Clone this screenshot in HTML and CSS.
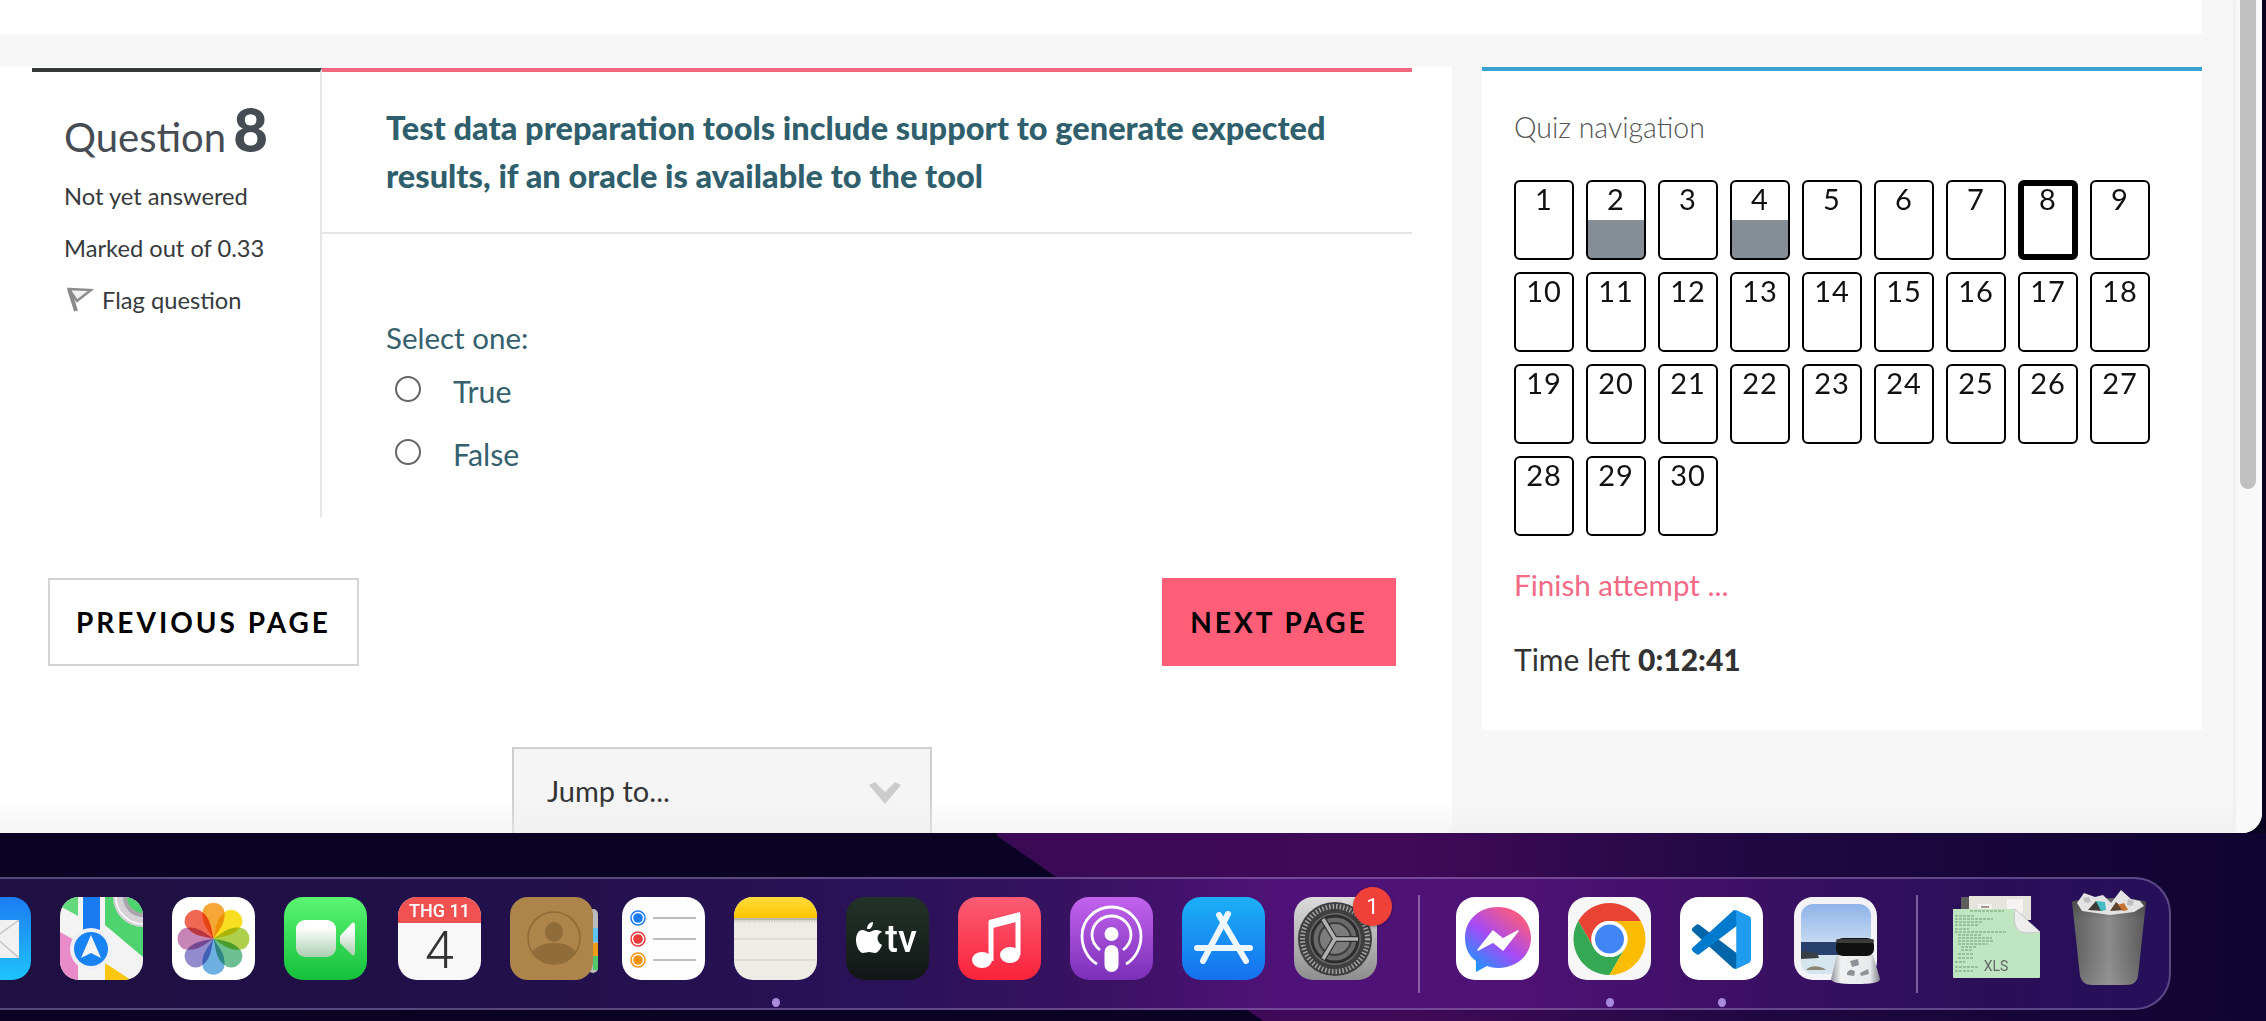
FILE: index.html
```html
<!DOCTYPE html>
<html lang="en">
<head>
<meta charset="utf-8">
<title>Quiz attempt</title>
<link rel="stylesheet" href="styles.css">
</head>
<body>
<div class="window">
  <div class="page">
    <div class="topband"></div>
    <div class="columns">
      <main class="main">
        <section class="que">
          <aside class="info">
            <h3 class="qno">Question <b>8</b></h3>
            <p class="state">Not yet answered</p>
            <p class="state">Marked out of 0.33</p>
            <p class="flag">
              <svg class="flagicon" viewBox="0 0 26 28"><path d="M5 3l7 22" stroke="#8a8a8a" stroke-width="4" fill="none"/><path d="M5 3l22 1L13 15z" fill="#f2f2f2" stroke="#8c8c8c" stroke-width="2.400"/></svg>
              <span>Flag question</span>
            </p>
          </aside>
          <div class="content">
            <div class="qtext">Test data preparation tools include support to generate expected results, if an oracle is available to the tool</div>
            <div class="answers">
              <div class="prompt">Select one:</div>
              <label class="opt"><span class="radio"></span>True</label>
              <label class="opt"><span class="radio"></span>False</label>
            </div>
          </div>
        </section>
        <div class="pager">
          <a class="btn">PREVIOUS PAGE</a>
          <a class="btn primary">NEXT PAGE</a>
        </div>
        <div class="jumpwrap">
          <div class="jump"><span>Jump to...</span>
            <svg class="chev" viewBox="0 0 32 22"><path d="M0 3l6-3 10 10L26 0l6 3-16 19z" fill="#ccc"/></svg>
          </div>
        </div>
      </main>
      <aside class="side">
        <div class="sidetitle">Quiz navigation</div>
        <div class="grid">
          <a class="cell">1</a><a class="cell ans">2</a><a class="cell">3</a><a class="cell ans">4</a><a class="cell">5</a><a class="cell">6</a><a class="cell">7</a><a class="cell cur">8</a><a class="cell">9</a>
          <a class="cell">10</a><a class="cell">11</a><a class="cell">12</a><a class="cell">13</a><a class="cell">14</a><a class="cell">15</a><a class="cell">16</a><a class="cell">17</a><a class="cell">18</a>
          <a class="cell">19</a><a class="cell">20</a><a class="cell">21</a><a class="cell">22</a><a class="cell">23</a><a class="cell">24</a><a class="cell">25</a><a class="cell">26</a><a class="cell">27</a>
          <a class="cell">28</a><a class="cell">29</a><a class="cell">30</a>
        </div>
        <div class="finish">Finish attempt ...</div>
        <div class="time">Time left <b>0:12:41</b></div>
      </aside>
    </div>
    <div class="fade"></div>
  </div>
  <div class="scroll"><div class="thumb"></div></div>
</div>
<div class="desk">
  <svg class="wall" viewBox="0 0 2266 188" preserveAspectRatio="none">
    <defs>
      <linearGradient id="wg" x1="0" x2="1" y1="0" y2="0">
        <stop offset="0" stop-color="#07021a"/><stop offset=".44" stop-color="#0d0326"/><stop offset=".44" stop-color="#3a0a55"/><stop offset=".62" stop-color="#400a58"/><stop offset=".78" stop-color="#1f0842"/><stop offset="1" stop-color="#0f0430"/>
      </linearGradient>
    </defs>
    <rect width="2266" height="188" fill="url(#wg)"/>
    <path d="M0 0H993L1263 188H0z" fill="#0b0324"/>
  </svg>
  <div class="dock">
    <div class="tile"><svg viewBox="0 0 83 83"><defs><linearGradient id="m1" x1="0" y1="0" x2="0" y2="1"><stop offset="0" stop-color="#1d7cf2"/><stop offset="1" stop-color="#1ec4fb"/></linearGradient></defs><rect width="83" height="83" rx="19" fill="url(#m1)"/><rect x="12" y="23" width="59" height="38" rx="2" fill="#f1f1f1"/><path d="M12 23l29 22 30-22M12 61l23-21M71 61L47 40" fill="none" stroke="#c4c4c4" stroke-width="1.500"/></svg></div>

    <div class="tile"><svg viewBox="0 0 83 83"><defs><clipPath id="mp"><rect width="83" height="83" rx="19"/></clipPath></defs><g clip-path="url(#mp)"><rect width="83" height="83" fill="#f3f3f3"/><path d="M0 0h18v19L0 9z" fill="#62d97a"/><path d="M45 0h38v60L45 28z" fill="#4fd36f"/><path d="M0 35l18 10v38H0z" fill="#ea8bc9"/><path d="M45 66l26 17H45z" fill="#fdc60f"/><rect x="23" width="17" height="34" fill="#1a7bf0"/><circle cx="83" cy="0" r="30" fill="#d6d2d8"/><circle cx="83" cy="0" r="27" fill="none" stroke="#fff" stroke-width="1.500"/><circle cx="83" cy="0" r="20" fill="#a9a5ac"/><circle cx="83" cy="0" r="16" fill="#4fd36f"/><circle cx="31" cy="52" r="21" fill="#eef0f5"/><circle cx="31" cy="52" r="17" fill="#1a83f3"/><path d="M31 38l10 23-10-5-10 5z" fill="#f5f5f5"/></g></svg></div>

    <div class="tile"><svg viewBox="0 0 83 83"><rect width="83" height="83" rx="19" fill="#fff"/><g transform="translate(41.500 41.700)"><path class="petal" d="M0 0C-5-8-12-15-11-26A11 10 0 0 1 11-26C12-15 5-8 0 0z" fill="#f7a023"/><path class="petal" d="M0 0C-5-8-12-15-11-26A11 10 0 0 1 11-26C12-15 5-8 0 0z" fill="#f7dc0c" transform="rotate(45)"/><path class="petal" d="M0 0C-5-8-12-15-11-26A11 10 0 0 1 11-26C12-15 5-8 0 0z" fill="#a8cc3e" transform="rotate(90)"/><path class="petal" d="M0 0C-5-8-12-15-11-26A11 10 0 0 1 11-26C12-15 5-8 0 0z" fill="#5fba88" transform="rotate(135)"/><path class="petal" d="M0 0C-5-8-12-15-11-26A11 10 0 0 1 11-26C12-15 5-8 0 0z" fill="#62a9e0" transform="rotate(180)"/><path class="petal" d="M0 0C-5-8-12-15-11-26A11 10 0 0 1 11-26C12-15 5-8 0 0z" fill="#8a81c8" transform="rotate(225)"/><path class="petal" d="M0 0C-5-8-12-15-11-26A11 10 0 0 1 11-26C12-15 5-8 0 0z" fill="#c17bb0" transform="rotate(270)"/><path class="petal" d="M0 0C-5-8-12-15-11-26A11 10 0 0 1 11-26C12-15 5-8 0 0z" fill="#ef5a45" transform="rotate(315)"/></g></svg></div>

    <div class="tile"><svg viewBox="0 0 83 83"><defs><linearGradient id="f1" x1="0" y1="0" x2="0" y2="1"><stop offset="0" stop-color="#5bf674"/><stop offset="1" stop-color="#14c03a"/></linearGradient><linearGradient id="f2" x1="0" y1="0" x2="0" y2="1"><stop offset=".2" stop-color="#fff"/><stop offset="1" stop-color="#aacfb0"/></linearGradient></defs><rect width="83" height="83" rx="19" fill="url(#f1)"/><rect x="12" y="23" width="40" height="37" rx="9" fill="url(#f2)"/><path d="M56 39l12-13c1-1 3 0 3 2v28c0 2-2 3-3 2L56 46z" fill="url(#f2)"/></svg></div>

    <div class="tile cal"><svg viewBox="0 0 83 83"><defs><clipPath id="cal"><rect width="83" height="83" rx="19"/></clipPath></defs><g clip-path="url(#cal)"><rect width="83" height="83" fill="#f8f8f8"/><rect width="83" height="26" fill="#f05252"/></g><text x="41.500" y="20" class="svgt caltop" text-anchor="middle">THG 11</text><text x="41.500" y="71" class="svgt calnum" text-anchor="middle">4</text></svg></div>

    <div class="tile"><svg viewBox="0 0 83 83"><rect x="78" y="12" width="10" height="64" rx="5" fill="#bbb"/><rect x="83" y="31" width="5" height="14" fill="#5cc3f4"/><rect x="83" y="46" width="5" height="13" fill="#f29b16"/><rect x="83" y="59" width="5" height="14" fill="#52c76a"/><rect width="83" height="83" rx="18" fill="#ad8449"/><circle cx="44" cy="41" r="26" fill="none" stroke="#8f6b38" stroke-width="1.600"/><ellipse cx="44" cy="35" rx="9" ry="10" fill="#906c3a"/><path d="M22 56c3-7 12-10 22-10s19 3 22 10c-5 6-13 10-22 10s-17-4-22-10z" fill="#906c3a"/></svg></div>

    <div class="tile"><svg viewBox="0 0 83 83"><rect width="83" height="83" rx="19" fill="#fdfdfd"/><circle cx="16" cy="21" r="7" fill="#fff" stroke="#1a7cf0" stroke-width="1.500"/><circle cx="16" cy="21" r="4.800" fill="#1a7cf0"/><circle cx="16" cy="42" r="7" fill="#fff" stroke="#ee3b3b" stroke-width="1.500"/><circle cx="16" cy="42" r="4.800" fill="#ee3b3b"/><circle cx="16" cy="63" r="7" fill="#fff" stroke="#f2920f" stroke-width="1.500"/><circle cx="16" cy="63" r="4.800" fill="#f2920f"/><path d="M31 21h43M31 42h43M31 63h43" stroke="#bdbdbd" stroke-width="2"/></svg></div>

    <div class="tile"><svg viewBox="0 0 83 83"><defs><clipPath id="nt"><rect width="83" height="83" rx="19"/></clipPath><linearGradient id="n1" x1="0" y1="0" x2="0" y2="1"><stop offset="0" stop-color="#ffdb3a"/><stop offset="1" stop-color="#fdc500"/></linearGradient></defs><g clip-path="url(#nt)"><rect width="83" height="83" fill="#efece6"/><rect width="83" height="21" fill="url(#n1)"/><rect y="21" width="83" height="2.500" fill="#b9b8ad"/><path d="M0 25h83" stroke="#c9c8c0" stroke-width="1.500" stroke-dasharray="1 1.500"/><path d="M0 42h83M0 63h83" stroke="#d8d6d0" stroke-width="1.500"/></g></svg><span class="dot"></span></div>

    <div class="tile"><svg viewBox="0 0 83 83"><defs><linearGradient id="t1" x1="0" y1="0" x2="0" y2="1"><stop offset="0" stop-color="#233329"/><stop offset="1" stop-color="#121616"/></linearGradient></defs><rect width="83" height="83" rx="19" fill="url(#t1)"/><path d="M30 33c-3 0-5 2-7 2s-4-2-7-2c-3 0-6 4-6 10 0 7 4 13 7 13 2 0 4-1 6-1s4 1 6 1c3 0 6-5 7-8-6-3-6-11 0-13-1-1-3-2-6-2zM24 32c2-2 3-4 3-7-3 0-6 3-6 7z" fill="#fff"/><text x="55" y="55" class="svgt tvt" text-anchor="middle">tv</text></svg></div>

    <div class="tile"><svg viewBox="0 0 83 83"><defs><linearGradient id="mu" x1="0" y1="0" x2="0" y2="1"><stop offset="0" stop-color="#fb5c74"/><stop offset="1" stop-color="#fa233b"/></linearGradient></defs><rect width="83" height="83" rx="19" fill="url(#mu)"/><path d="M33 24v40M60 17v41" fill="none" stroke="#fff" stroke-width="5"/><path d="M31 23l31-8v9l-31 8z" fill="#fff"/><ellipse cx="24" cy="63" rx="10" ry="8" fill="#fff"/><ellipse cx="52" cy="58" rx="10" ry="8" fill="#fff"/></svg></div>

    <div class="tile"><svg viewBox="0 0 83 83"><defs><linearGradient id="po" x1="0" y1="0" x2="0" y2="1"><stop offset="0" stop-color="#c263ee"/><stop offset="1" stop-color="#7b2fb8"/></linearGradient></defs><rect width="83" height="83" rx="19" fill="url(#po)"/><path d="M27 67C18 62 12 51 12 39a29.500 29 0 0 1 59 0c0 12-6 23-15 28" fill="none" stroke="#fff" stroke-width="2.800"/><path d="M30 53c-5-4-8-9-8-15a19.500 19 0 0 1 39 0c0 6-3 11-8 15" fill="none" stroke="#fff" stroke-width="2.800"/><circle cx="41.500" cy="37" r="7" fill="#fff"/><rect x="34.500" y="48" width="14" height="27" rx="7" fill="#fff"/></svg></div>

    <div class="tile"><svg viewBox="0 0 83 83"><defs><linearGradient id="as" x1="0" y1="0" x2="0" y2="1"><stop offset="0" stop-color="#1cb0f6"/><stop offset="1" stop-color="#1570ef"/></linearGradient></defs><rect width="83" height="83" rx="19" fill="url(#as)"/><g stroke="#fff" stroke-width="6" stroke-linecap="round" fill="none" opacity=".93"><path d="M46 17L21 64"/><path d="M37 18l27 46"/><path d="M15 51h53"/></g></svg></div>

    <div class="tile"><svg viewBox="0 0 83 83"><defs><linearGradient id="sp" x1="0" y1="0" x2="0" y2="1"><stop offset="0" stop-color="#dcdcdc"/><stop offset="1" stop-color="#8e8e8e"/></linearGradient></defs><rect width="83" height="83" rx="19" fill="url(#sp)"/><circle cx="41" cy="42" r="37" fill="#3f3f3f"/><circle cx="41" cy="42" r="32.500" fill="none" stroke="#a4a4a4" stroke-width="5" stroke-dasharray="1.500 2"/><circle cx="41" cy="42" r="26" fill="#6a6a6a"/><circle cx="41" cy="42" r="23" fill="none" stroke="#2d2d2d" stroke-width="3"/><circle cx="41" cy="42" r="16" fill="#7c7c7c" stroke="#3c3c3c" stroke-width="2"/><path d="M41 42H64M41 42L29 22M41 42L29 62" stroke="#2f2f2f" stroke-width="6"/><path d="M41 42H64M41 42L29 22M41 42L29 62" stroke="#b0b0b0" stroke-width="3.500"/></svg><span class="badge">1</span></div>

    <span class="sep first"></span>

    <div class="tile"><svg viewBox="0 0 83 83"><defs><linearGradient id="ms2" x1="0.150" y1="1" x2="0.850" y2="0.100"><stop offset="0" stop-color="#0d9bff"/><stop offset=".5" stop-color="#a64af5"/><stop offset="1" stop-color="#ff5c78"/></linearGradient></defs><rect width="83" height="83" rx="19" fill="#fff"/><path d="M42 10C23 10 9 23 9 41c0 10 4 18 11 23v11l11-6c3 1 7 2 11 2 19 0 33-13 33-30S61 10 42 10z" fill="url(#ms2)"/><path d="M22 53l15-19 10 8 15-8-15 19-10-8z" fill="#fff" stroke="#fff" stroke-width="1.500" stroke-linejoin="round"/></svg></div>

    <div class="tile"><span class="dot"></span><svg viewBox="0 0 83 83"><rect width="83" height="83" rx="19" fill="#f7f7f7"/><path d="M10.300 24A36 36 0 0 1 72.700 24H41.500A18 18 0 0 0 25.900 51z" fill="#e94335"/><path d="M41.500 78A36 36 0 0 1 10.300 24L25.900 51A18 18 0 0 0 57.100 51z" fill="#34a853"/><path d="M72.700 24A36 36 0 0 1 41.500 78L57.100 51A18 18 0 0 0 41.500 24z" fill="#fbbc04"/><circle cx="41.500" cy="42" r="18" fill="#fff"/><circle cx="41.500" cy="42" r="14.500" fill="#4285f4"/></svg></div>

    <div class="tile"><span class="dot"></span><svg viewBox="0 0 83 83"><rect width="83" height="83" rx="19" fill="#fff"/><g transform="translate(12 13) scale(.59)"><path d="M96.460 89.200L75.860 99.130a6.230 6.230 0 0 1-7.100-1.200L1.330 36.400a4.170 4.170 0 0 1 0-6.160l5.500-5a4.170 4.170 0 0 1 5.320-.24L93.400 86.630c2.720 2.070 6.630.13 6.630-3.300v.24a6.250 6.250 0 0 1-3.570 5.630z" fill="#0065a9"/><path d="M96.460 10.800L75.860.87a6.230 6.230 0 0 0-7.100 1.200L1.330 63.600a4.170 4.170 0 0 0 0 6.160l5.500 5a4.170 4.170 0 0 0 5.320.24L93.400 13.370c2.720-2.070 6.630-.13 6.630 3.300v-.24a6.250 6.250 0 0 0-3.570-5.630z" fill="#007acc"/><path d="M75.860 99.130a6.230 6.230 0 0 1-7.100-1.200c2.300 2.300 6.240.67 6.240-2.580V4.650c0-3.250-3.940-4.880-6.240-2.580a6.230 6.230 0 0 1 7.100-1.200l20.600 9.900A6.250 6.250 0 0 1 100 16.400v67.200a6.250 6.250 0 0 1-3.540 5.630z" fill="#1f9cf0"/></g></svg></div>

    <div class="tile prev"><svg viewBox="0 0 83 83"><defs><clipPath id="pv"><rect x="7" y="7" width="70" height="70" rx="12"/></clipPath><linearGradient id="sk" x1="0" y1="0" x2="0" y2="1"><stop offset="0" stop-color="#8fb3e8"/><stop offset="1" stop-color="#c8dcf2"/></linearGradient><linearGradient id="gl" x1="0" y1="0" x2="1" y2="0"><stop offset="0" stop-color="#8f9499"/><stop offset=".2" stop-color="#f0f2f3"/><stop offset=".8" stop-color="#e6e8ea"/><stop offset="1" stop-color="#7d8186"/></linearGradient></defs><rect width="83" height="83" rx="19" fill="#f3f2f6"/><g clip-path="url(#pv)"><rect x="7" y="7" width="70" height="40" fill="url(#sk)"/><rect x="7" y="45" width="70" height="14" fill="#27406e"/><rect x="7" y="58" width="70" height="20" fill="#d5e5ee"/><path d="M7 54l16 2 2 5-18 1z" fill="#3a3f46"/><path d="M12 73c4-5 14-5 20 0z" fill="#8d8674"/></g><path d="M43 58h36l7 24c0 3-6 5-24 5s-25-2-25-5z" fill="url(#gl)"/><path d="M56 64l8-2 1 6-7 2zM53 76c2-4 6-4 8-1l-1 4-7-1zM66 76l8-4 1 5-8 2z" fill="#8d9298"/><rect x="42" y="41" width="38" height="18" rx="7" fill="#111"/><rect x="42" y="42" width="38" height="4" rx="2" fill="#3b3b3b"/></svg></div>

    <span class="sep last"></span>

    <div class="tile xls"><svg viewBox="0 0 88 83"><rect x="8" y="2" width="12" height="18" fill="#5e5e5e"/><path d="M16 1h62v24H16z" fill="#e6e2dc"/><path d="M25 9h14v5H25zM54 4h16v14H54z" fill="#f5f3f1"/><path d="M28 12h8" stroke="#a98" stroke-width="2"/><path d="M0 14H62L87 37V82a1 1 0 0 1-1 1H1a1 1 0 0 1-1-1z" fill="#bfe6c1"/><path d="M62 14c-2 10 0 19 4 22 6 3 14 2 21 1z" fill="#eeeeee" stroke="#c6c6c6"/><path d="M17 16h34M2 21h20M2 24h38M2 27h28M2 30h24M2 34h14M2 37h52M5 40h24M5 43h34M5 46h36M5 49h30M8 52h16M8 55h12M5 59h16M5 63h16M2 67h10M2 72h24M2 76h18" stroke="#6f9c73" stroke-width="1" stroke-dasharray="3 1"/><text x="43" y="76" class="svgt xlst" text-anchor="middle">XLS</text></svg></div>

    <div class="tile trash"><svg viewBox="0 0 74 95"><defs><linearGradient id="tr" x1="0" y1="0" x2="1" y2="0"><stop offset="0" stop-color="#5f5f5f"/><stop offset=".5" stop-color="#8c8c8c"/><stop offset="1" stop-color="#5a5a5a"/></linearGradient><linearGradient id="tr2" x1="0" y1="0" x2="0" y2="1"><stop offset="0" stop-color="#000" stop-opacity=".25"/><stop offset=".25" stop-color="#000" stop-opacity="0"/><stop offset="1" stop-color="#fff" stop-opacity=".08"/></linearGradient></defs><path d="M0 12c6-5 66-5 74 0L66 86c-1 6-5 9-12 9H20c-7 0-10-3-12-9z" fill="url(#tr)"/><path d="M0 12c6-5 66-5 74 0L66 86c-1 6-5 9-12 9H20c-7 0-10-3-12-9z" fill="url(#tr2)"/><path d="M5 13L12 3l11 4 8-2 8 8 10-13 10 9 9 2 4 5-10 6-24 3-28-4z" fill="#e3e3e3"/><path d="M16 20l8-9 7 10z" fill="#3b3a36"/><path d="M24 11l9 1 1 8-5 1z" fill="#43bcc4"/><path d="M38 21l6-9 9 8z" fill="#5c4230"/><path d="M46 15l6-2 4 7-5 1z" fill="#c8712d"/><path d="M11 8l6-1 2 5-6 1zM56 9l6 2-2 5-5-1z" fill="#bdbdbd"/></svg></div>
  </div>
</div>
</body>
</html>
```

FILE: styles.css
```css
* { box-sizing: border-box; }
html, body { margin: 0; padding: 0; }
body { width: 2266px; height: 1021px; overflow: hidden; background: #0a0320; font-family: Lato, "Liberation Sans", sans-serif; color: #373a3c; position: relative; }
a { display: block; }
p { margin: 0; }

.window { position: relative; z-index: 2; display: flex; width: 2262px; height: 833px; overflow: hidden; background: #f8f8f8; border-bottom-right-radius: 20px; }
.page { position: relative; width: 2233px; height: 833px; background: #f7f7f7; box-shadow: 2px 0 4px rgba(0,0,0,.06); }
.topband { width: 2202px; height: 34px; background: #fff; }
.columns { display: flex; align-items: flex-start; padding-top: 33px; }
.fade { position: absolute; left: 0; right: 0; bottom: 0; height: 34px; background: linear-gradient(rgba(240,240,240,0), rgba(236,236,236,.55)); pointer-events: none; }

.main { width: 1452px; height: 766px; background: #fff; padding: 1px 0 0 32px; }
.que { display: flex; width: 1380px; height: 449px; }
.info { width: 290px; height: 449px; border-top: 4px solid #373a3c; border-right: 2px solid #e6e6e6; padding: 31px 0 0 32px; }
.qno { margin: 0 0 12px; font-size: 40px; line-height: 60px; font-weight: 400; color: #454c53; white-space: nowrap; }
.qno b { font-size: 60px; font-weight: 900; line-height: 52px; margin-left: -3px; }
.state { font-size: 23.700px; line-height: 34px; margin-bottom: 18px; white-space: nowrap; }
.flag { display: flex; align-items: center; font-size: 23.700px; line-height: 34px; white-space: nowrap; }
.flagicon { width: 26px; height: 28px; margin-right: 12px; flex: none; overflow: visible; }

.content { flex: 1; border-top: 4px solid #f0677f; }
.qtext { height: 162px; padding: 32px 40px 0 64px; border-bottom: 2px solid #e6e6e6; font-size: 32.500px; line-height: 48px; font-weight: 900; color: #2f5f6c; }
.answers { padding: 83px 0 0 64px; color: #35616e; font-size: 29.500px; }
.prompt { line-height: 42px; }
.opt { display: flex; align-items: center; height: 63px; font-size: 30.300px; }
.radio { width: 26px; height: 26px; border: 2px solid #666; border-radius: 50%; margin: 0 32px 4px 9px; background: #fff; }

.pager { display: flex; justify-content: space-between; width: 1348px; margin: 61px 0 0 16px; }
.btn { display: flex; align-items: center; justify-content: center; height: 88px; width: 311px; border: 2px solid #d4d4d4; font-size: 28px; font-weight: 700; letter-spacing: 3px; color: #000; background: #fff; }
.btn.primary { width: 234px; background: #ff5e78; border-color: #ff5e78; }

.jumpwrap { margin: 81px 0 0 480px; }
.jump { display: flex; align-items: center; justify-content: space-between; width: 420px; height: 90px; padding: 0 29px 4px 33px; background: #f5f5f5; border: 2px solid #cfcfcf; font-size: 29px; color: #333; }
.chev { width: 32px; height: 22px; margin-top: 6px; }

.side { width: 720px; height: 663px; margin-left: 30px; background: #fff; border-top: 4px solid #38a2d2; padding: 36px 0 0 32px; }
.sidetitle { font-size: 28.500px; line-height: 40px; font-weight: 300; color: #555; }
.grid { display: grid; grid-template-columns: repeat(9, 60px); grid-auto-rows: 80px; gap: 12px; margin-top: 33px; }
.cell { position: relative; height: 80px; border: 2px solid #000; border-radius: 6px; text-align: center; font-size: 29px; line-height: 34px; color: #111; background: #fff; letter-spacing: 1px; overflow: hidden; }
.cell.ans { background: linear-gradient(#fff 0, #fff 38px, #858e96 38px, #858e96 100%); }
.cell.cur { border-width: 6px; line-height: 26px; }
.finish { margin-top: 28px; font-size: 29.600px; line-height: 42px; color: #f26a85; }
.time { margin-top: 32px; font-size: 30px; line-height: 42px; color: #333; }
.time b { font-weight: 900; }

.scroll { width: 29px; height: 833px; background: #f9f9f9; padding: 0 5px 0 7px; }
.thumb { width: 16px; height: 489px; background: #c1c1c1; border-radius: 0 0 8px 8px; }

.desk { position: absolute; left: 0; top: 833px; width: 2266px; height: 188px; overflow: hidden; }
.wall { position: absolute; inset: 0; width: 100%; height: 100%; }
.dock { position: absolute; left: -60px; top: 44px; width: 2231px; height: 133px; display: flex; align-items: flex-start; gap: 29px; padding: 18px 0 0 8px; background: linear-gradient(90deg, #1e1040 0, #21104a 25%, #2a1258 43%, #3a1262 52%, #4f1278 60%, #4f1276 70%, #3c1064 81%, #2a0f58 92%, #26105a 100%); border: 2px solid rgba(170,150,200,.42); border-left: 0; border-radius: 0 36px 36px 0; }
.tile { position: relative; width: 83px; height: 83px; flex: none; }
.tile svg { display: block; width: 100%; height: 100%; overflow: visible; }
.cal { margin-left: 2px; }
.prev { margin-left: 2px; }
.xls { width: 88px; margin-top: -2px; }
.trash { width: 74px; height: 95px; margin-top: -7px; margin-left: 2px; }
.sep { width: 2px; height: 98px; margin-top: -2px; background: rgba(200,170,225,.5); flex: none; }
.sep.first { margin-left: 12px; margin-right: 7px; }
.sep.last { margin-left: 10px; margin-right: 6px; }
.dot { position: absolute; left: 38px; top: 101px; width: 8px; height: 9px; border-radius: 50%; background: #a98ade; z-index: 1; }
.badge { position: absolute; right: -15px; top: -10px; width: 39px; height: 39px; border-radius: 50%; background: #f0403a; color: #fff; font: 400 22px/39px Roboto, sans-serif; text-align: center; box-shadow: 0 1px 3px rgba(0,0,0,.35); }
.petal { mix-blend-mode: multiply; opacity: .92; }
.svgt { font-family: Roboto, "Liberation Sans", sans-serif; }
.caltop { font-size: 18px; font-weight: 500; fill: #fff; }
.calnum { font-size: 52px; font-weight: 300; fill: #333; }
.tvt { font-size: 38px; font-weight: 500; fill: #fff; }
.xlst { font-size: 14px; fill: #666; }
```
